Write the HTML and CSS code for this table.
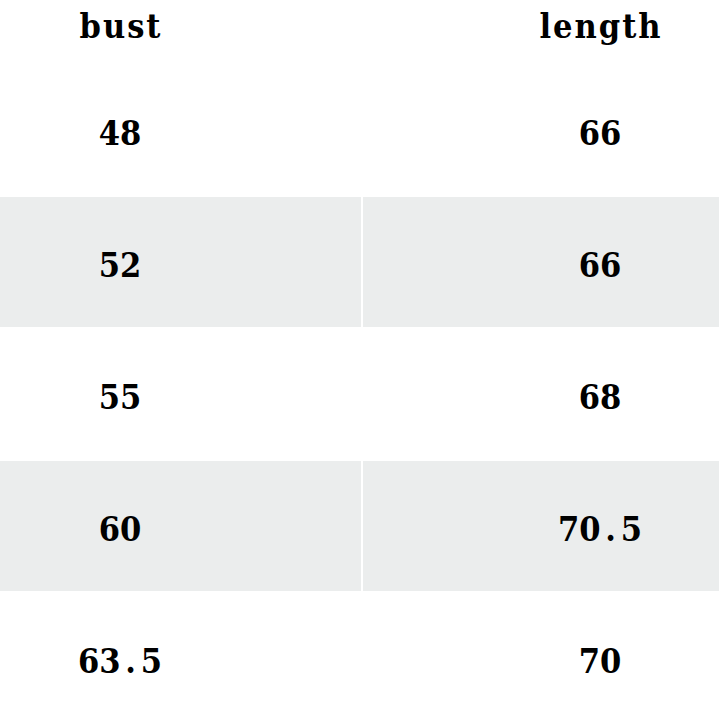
FILE: index.html
```html
<!DOCTYPE html>
<html>
<head>
<meta charset="utf-8">
<link rel="stylesheet" href="styles.css">
</head>
<body>
<div class="table">
  <div class="row head"><div class="cell c1">bust</div><div class="cell c2">length</div></div>
  <div class="row"><div class="cell c1">48</div><div class="cell c2">66</div></div>
  <div class="row alt"><div class="cell c1">52</div><div class="cell c2">66</div></div>
  <div class="row"><div class="cell c1">55</div><div class="cell c2">68</div></div>
  <div class="row alt"><div class="cell c1">60</div><div class="cell c2">70<span class="dot">.</span>5</div></div>
  <div class="row"><div class="cell c1">63<span class="dot">.</span>5</div><div class="cell c2">70</div></div>
</div>
</body>
</html>
```
FILE: styles.css
```css
html, body {
  margin: 0;
  padding: 0;
  background: #fff;
}
body {
  width: 719px;
  height: 719px;
  overflow: hidden;
}
.table {
  display: flex;
  flex-direction: column;
  gap: 2px;
}
.row {
  display: grid;
  grid-template-columns: 361px 1fr;
  column-gap: 2px;
  height: 130px;
}
.row.head {
  height: 63px;
}
.row.alt .cell {
  background: #ebeded;
}
.cell {
  display: flex;
  align-items: center;
  justify-content: center;
  font-family: "DejaVu Serif", "Liberation Serif", serif;
  font-stretch: condensed;
  font-weight: bold;
  font-size: 34px;
  color: #000;
  padding-top: 6px;
  box-sizing: border-box;
  white-space: pre;
}
.head .cell {
  padding-top: 0;
  padding-bottom: 12px;
  letter-spacing: 2px;
}
.dot {
  display: inline-block;
  width: 20px;
  text-align: center;
}
.c1 {
  padding-right: 121px;
}
.c2 {
  padding-left: 118px;
}
.head .c1 {
  padding-right: 119px;
}
.head .c2 {
  padding-left: 120px;
}
```
